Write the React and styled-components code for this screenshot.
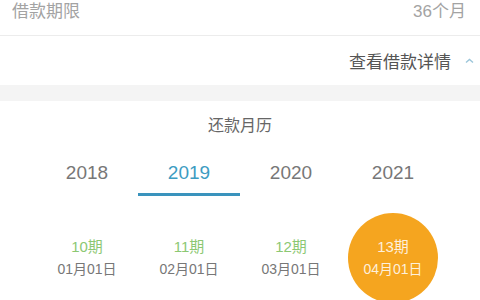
import React from "react";
import styled, { createGlobalStyle } from "styled-components";

const GlobalStyle = createGlobalStyle`
  html, body {
    margin: 0;
    padding: 0;
    background: #fff;
    overflow: hidden;
  }
  body {
    font-family: "Liberation Sans", "Noto Sans CJK SC", sans-serif;
  }
`;

const Page = styled.div`
  width: 480px;
  height: 300px;
  overflow: hidden;
  background: #fff;
`;

const InfoRow = styled.div`
  height: 36px;
  box-sizing: border-box;
  padding: 2px 14px 0 12px;
  display: flex;
  justify-content: space-between;
  align-items: flex-start;
  border-bottom: 1px solid #ececec;
  font-size: 17px;
  line-height: 20px;
  color: #a3a3a3;
`;

const DetailRow = styled.div`
  height: 49px;
  display: flex;
  align-items: center;
  justify-content: flex-end;
  padding-right: 6px;
  font-size: 17px;
  color: #555;
  gap: 14px;
`;

const Band = styled.div`
  height: 16px;
  background: #f4f4f4;
`;

const Calendar = styled.section`
  padding-top: 14px;
`;

const Title = styled.div`
  text-align: center;
  font-size: 16px;
  line-height: 22px;
  color: #666;
`;

const Columns = styled.div`
  display: grid;
  grid-template-columns: repeat(4, 102px);
  padding: 0 36px;
`;

const Tabs = styled(Columns)`
  margin-top: 13px;
`;

const Tab = styled.div`
  height: 46px;
  box-sizing: border-box;
  padding-top: 12px;
  text-align: center;
  font-size: 19px;
  line-height: 22px;
  color: ${(p) => (p.active ? "#3d9cc2" : "#777")};
  border-bottom: 3px solid ${(p) => (p.active ? "#3a93bd" : "transparent")};
`;

const Periods = styled(Columns)`
  margin-top: 17px;
`;

const Period = styled.div`
  height: 90px;
  width: 90px;
  justify-self: center;
  border-radius: 50%;
  display: flex;
  flex-direction: column;
  align-items: center;
  justify-content: center;
  background: ${(p) => (p.current ? "#f5a51f" : "transparent")};
`;

const Term = styled.div`
  font-size: 15px;
  line-height: 22px;
  color: ${(p) => (p.current ? "rgba(255,255,255,0.85)" : "#8cc873")};
`;

const DateText = styled.div`
  font-size: 14px;
  line-height: 22px;
  color: ${(p) => (p.current ? "rgba(255,255,255,0.85)" : "#777")};
`;

const years = ["2018", "2019", "2020", "2021"];
const periods = [
  { term: "10期", date: "01月01日" },
  { term: "11期", date: "02月01日" },
  { term: "12期", date: "03月01日" },
  { term: "13期", date: "04月01日", current: true },
];

export default function App() {
  return (
    <Page>
      <GlobalStyle />
      <InfoRow>
        <span>借款期限</span>
        <span>36个月</span>
      </InfoRow>
      <DetailRow>
        <span>查看借款详情</span>
        <svg width="9" height="6" viewBox="0 0 9 6">
          <path d="M1 4.5 L4.5 1.5 L8 4.5" fill="none" stroke="#9cc6da" strokeWidth="1.4" />
        </svg>
      </DetailRow>
      <Band />
      <Calendar>
        <Title>还款月历</Title>
        <Tabs>
          {years.map((y) => (
            <Tab key={y} active={y === "2019"}>
              {y}
            </Tab>
          ))}
        </Tabs>
        <Periods>
          {periods.map((p) => (
            <Period key={p.term} current={p.current}>
              <Term current={p.current}>{p.term}</Term>
              <DateText current={p.current}>{p.date}</DateText>
            </Period>
          ))}
        </Periods>
      </Calendar>
    </Page>
  );
}
